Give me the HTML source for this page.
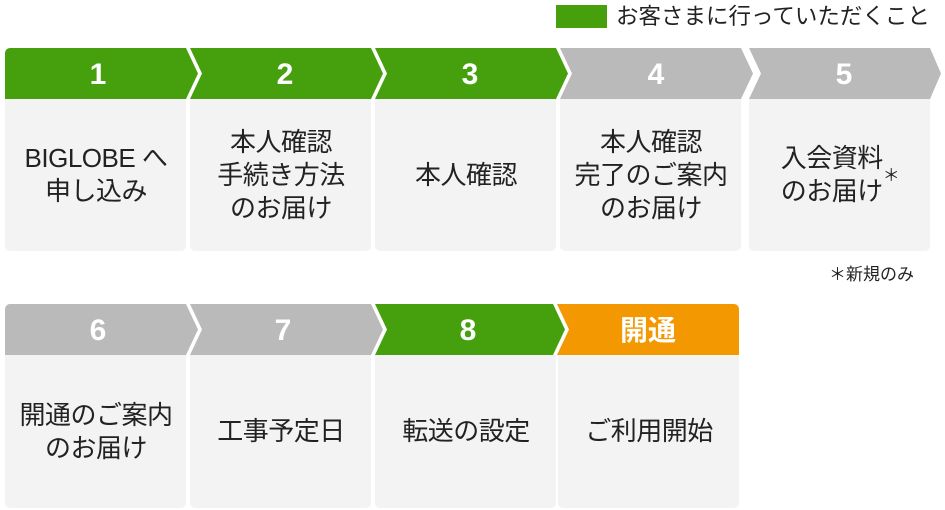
<!DOCTYPE html>
<html><head><meta charset="utf-8"><style>
body{margin:0;width:945px;height:510px;background:#fff;overflow:hidden;font-family:"Liberation Sans","Noto Sans CJK JP",sans-serif}
svg{position:absolute;left:0;top:0}
.n{font-family:"Liberation Sans","Noto Sans CJK JP",sans-serif;font-weight:bold;fill:#fff;font-size:30px;text-anchor:middle}
.t{position:absolute;display:flex;align-items:center;justify-content:center;text-align:center;font-size:26px;line-height:33px;color:#222;width:182px;letter-spacing:-0.5px}
</style></head><body>
<svg width="945" height="510">
<rect x="556" y="5" width="51" height="23" fill="#46a00e"/>
<text x="616" y="24" font-size="22.5" fill="#222" font-family="Liberation Sans,Noto Sans CJK JP,sans-serif">お客さまに行っていただくこと</text>
<g fill="#f3f3f3">
<path d="M5 99H186V246a5 5 0 0 1-5 5H10a5 5 0 0 1-5-5Z"/>
<path d="M190 99H371V246a5 5 0 0 1-5 5H195a5 5 0 0 1-5-5Z"/>
<path d="M375 99H556V246a5 5 0 0 1-5 5H380a5 5 0 0 1-5-5Z"/>
<path d="M560 99H741V246a5 5 0 0 1-5 5H565a5 5 0 0 1-5-5Z"/>
<path d="M749 99H930V246a5 5 0 0 1-5 5H754a5 5 0 0 1-5-5Z"/>
<path d="M5 355H186V503a5 5 0 0 1-5 5H10a5 5 0 0 1-5-5Z"/>
<path d="M190 355H371V503a5 5 0 0 1-5 5H195a5 5 0 0 1-5-5Z"/>
<path d="M375 355H556V503a5 5 0 0 1-5 5H380a5 5 0 0 1-5-5Z"/>
<path d="M558 355H739V503a5 5 0 0 1-5 5H563a5 5 0 0 1-5-5Z"/>
</g>
<path d="M10 48H186L198 73.5L186 99H5V53a5 5 0 0 1 5-5Z" fill="#46a00e"/>
<path d="M190 48H371L383 73.5L371 99H190L202 73.5Z" fill="#46a00e"/>
<path d="M375 48H556L568 73.5L556 99H375L387 73.5Z" fill="#46a00e"/>
<path d="M560 48H741L753 73.5L741 99H560L572 73.5Z" fill="#bababa"/>
<path d="M749 48H930L941 73.5L930 99H749L761 73.5Z" fill="#bababa"/>
<text class="n" x="98" y="84">1</text>
<text class="n" x="285" y="84">2</text>
<text class="n" x="470" y="84">3</text>
<text class="n" x="656" y="84">4</text>
<text class="n" x="844" y="84">5</text>
<path d="M10 304H186L198 329.5L186 355H5V309a5 5 0 0 1 5-5Z" fill="#bababa"/>
<path d="M190 304H371L383 329.5L371 355H190L202 329.5Z" fill="#bababa"/>
<path d="M375 304H553L565 329.5L553 355H375L387 329.5Z" fill="#46a00e"/>
<path d="M557 304H734a5 5 0 0 1 5 5V355H557L569 329.5Z" fill="#f39800"/>
<text class="n" x="98" y="340">6</text>
<text class="n" x="283" y="340">7</text>
<text class="n" x="468" y="340">8</text>
<text class="n" x="648" y="340" style="font-size:28px">開通</text>
<text x="829" y="280" font-size="17" fill="#222" font-family="Liberation Sans,Noto Sans CJK JP,sans-serif">＊新規のみ</text>
</svg>
<div class="t" style="left:5px;top:99px;height:152px">BIGLOBE へ<br>申し込み</div>
<div class="t" style="left:190px;top:99px;height:152px">本人確認<br>手続き方法<br>のお届け</div>
<div class="t" style="left:375px;top:99px;height:152px">本人確認</div>
<div class="t" style="left:560px;top:99px;height:152px">本人確認<br>完了のご案内<br>のお届け</div>
<div class="t" style="left:749px;top:99px;height:152px">入会資料<br>のお届け<span style="font-size:17px;vertical-align:6px">＊</span></div>
<div class="t" style="left:5px;top:355px;height:153px">開通のご案内<br>のお届け</div>
<div class="t" style="left:190px;top:355px;height:153px">工事予定日</div>
<div class="t" style="left:375px;top:355px;height:153px">転送の設定</div>
<div class="t" style="left:558px;top:355px;height:153px">ご利用開始</div>
</body></html>
